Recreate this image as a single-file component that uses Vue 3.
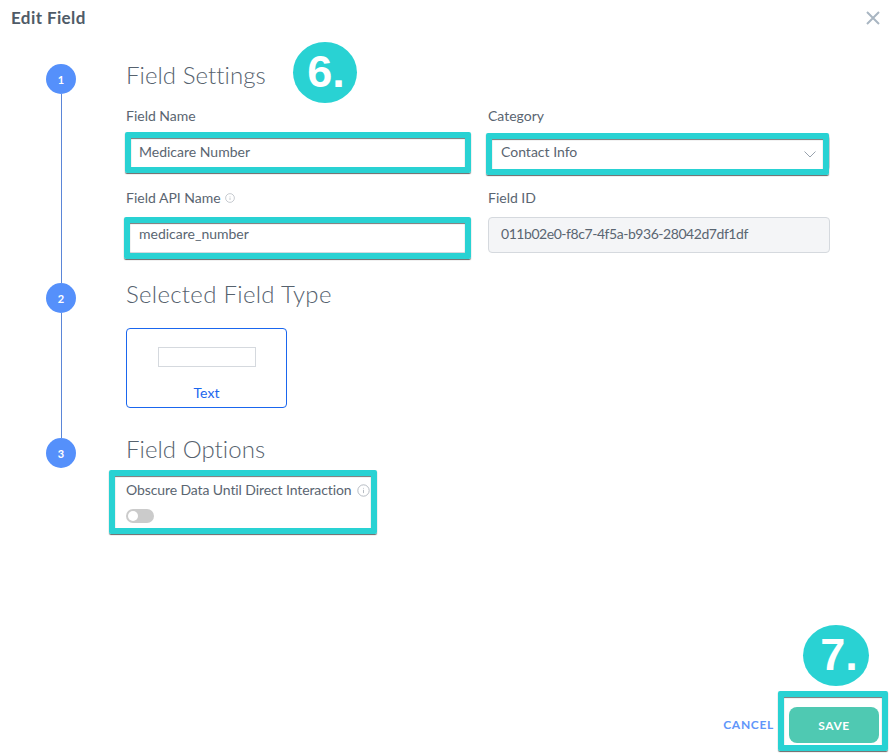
<script setup>
const infoPath = 'M8 7.2v4M8 4.8v.9'
</script>

<template>
  <div class="modal">
    <header class="head">
      <h1 class="head-title">Edit Field</h1>
      <svg class="close" viewBox="0 0 14 14" aria-label="Close">
        <path d="M1 1l12 12M13 1L1 13" />
      </svg>
    </header>

    <main class="steps">
      <section class="step">
        <div class="rail"><span class="dot">1</span><span class="line"></span></div>
        <div class="body">
          <h2 class="title">Field Settings</h2>
          <div class="grid">
            <div class="field">
              <label class="label">Field Name</label>
              <div class="input">Medicare Number</div>
            </div>
            <div class="field">
              <label class="label">Category</label>
              <div class="input select">
                <span>Contact Info</span>
                <svg class="chev" viewBox="0 0 12 7"><path d="M.5.5L6 6 11.5.5" /></svg>
              </div>
            </div>
            <div class="field">
              <label class="label api">Field API Name
                <svg class="info small" viewBox="0 0 16 16"><circle cx="8" cy="8" r="7" /><path :d="infoPath" /></svg>
              </label>
              <div class="input">medicare_number</div>
            </div>
            <div class="field">
              <label class="label">Field ID</label>
              <div class="input disabled">011b02e0-f8c7-4f5a-b936-28042d7df1df</div>
            </div>
          </div>
        </div>
      </section>

      <section class="step">
        <div class="rail"><span class="dot">2</span><span class="line"></span></div>
        <div class="body">
          <h2 class="title">Selected Field Type</h2>
          <div class="type-card">
            <span class="type-preview"></span>
            <span class="type-name">Text</span>
          </div>
        </div>
      </section>

      <section class="step last">
        <div class="rail"><span class="dot">3</span></div>
        <div class="body">
          <h2 class="title">Field Options</h2>
          <label class="label option">Obscure Data Until Direct Interaction
            <svg class="info" viewBox="0 0 16 16"><circle cx="8" cy="8" r="7" /><path :d="infoPath" /></svg>
          </label>
          <span class="toggle"><span class="knob"></span></span>
        </div>
      </section>
    </main>

    <footer class="foot">
      <span class="cancel">CANCEL</span>
      <span class="save">SAVE</span>
    </footer>

    <span class="frame f-name"></span>
    <span class="frame f-category"></span>
    <span class="frame f-api"></span>
    <span class="frame f-options"></span>
    <span class="frame f-save"></span>
    <span class="badge b-six">6.</span>
    <span class="badge b-seven">7.</span>
  </div>
</template>

<style>
body { background: #fff; }
</style>

<style scoped>
.modal {
  position: relative;
  width: 893px;
  height: 755px;
  overflow: hidden;
  display: flex;
  flex-direction: column;
  background: #fff;
  color: #5a6571;
  font-family: Lato, "Open Sans", sans-serif;
  font-size: 14px;
  box-sizing: border-box;
}
.head {
  height: 64px;
  flex: none;
  display: flex;
  align-items: flex-start;
  justify-content: space-between;
  padding: 8px 13px 0 11px;
  box-sizing: border-box;
}
.head-title {
  margin: 0;
  font-size: 17px;
  line-height: 20px;
  font-weight: 700;
  letter-spacing: .4px;
  color: #4f5b67;
}
.close { width: 14px; height: 14px; margin-top: 3px; fill: none; stroke: #a9b6c2; stroke-width: 2; }
.steps { flex: 1; padding-left: 46px; }
.step { display: flex; }
.rail {
  width: 30px;
  flex: none;
  margin-right: 50px;
  display: flex;
  flex-direction: column;
  align-items: center;
}
.dot {
  width: 30px;
  height: 30px;
  flex: none;
  border-radius: 50%;
  background: #5590fb;
  color: #fff;
  font-size: 11px;
  font-weight: 700;
  display: flex;
  align-items: center;
  justify-content: center;
}
.line { width: 1px; flex: 1; background: #5b86d8; }
.body { width: 704px; padding-bottom: 30px; }
.title {
  margin: 0 0 20px;
  font-size: 24px;
  line-height: 22px;
  font-weight: 300;
  color: #56626e;
  letter-spacing: .05px;
}
.grid { display: grid; grid-template-columns: 342px 342px; column-gap: 20px; row-gap: 17px; }
.label {
  display: flex;
  align-items: center;
  gap: 5px;
  height: 20px;
  margin-bottom: 9px;
  line-height: 20px;
  font-size: 14px;
  color: #5a6571;
}
.label.api { gap: 4px; }
.input {
  height: 36px;
  box-sizing: border-box;
  padding: 0 12px 3px;
  display: flex;
  align-items: center;
  border: 1px solid #d5d9de;
  border-radius: 4px;
}
.select { justify-content: space-between; padding-right: 13px; }
.chev { width: 12px; height: 7px; margin-top: 5px; fill: none; stroke: #98a2ad; stroke-width: 1; }
.disabled { background: #f4f5f7; letter-spacing: -.45px; }
.info { width: 13px; height: 13px; flex: none; fill: none; stroke: #a6aeb6; stroke-width: 1; }
.info.small { width: 10px; height: 10px; }
.step:nth-child(2) .title { margin-bottom: 23px; letter-spacing: .3px; }
.type-card {
  width: 161px;
  height: 80px;
  box-sizing: border-box;
  border: 1px solid #1a66ee;
  border-radius: 4px;
  padding-top: 18px;
  display: flex;
  flex-direction: column;
  align-items: center;
}
.type-preview { width: 98px; height: 20px; box-sizing: border-box; border: 1px solid #d5d9de; }
.type-name { margin-top: 16px; line-height: 20px; color: #1a66ee; }
.step.last .title { margin-bottom: 20px; }
.option { margin-bottom: 9px; letter-spacing: -.1px; }
.toggle {
  display: block;
  width: 28px;
  height: 14px;
  border-radius: 7px;
  background: #cbcbcb;
  padding: 2px;
  box-sizing: border-box;
}
.knob { display: block; width: 10px; height: 10px; border-radius: 50%; background: #fff; }
.foot {
  flex: none;
  height: 48px;
  display: flex;
  align-items: flex-start;
  justify-content: flex-end;
  padding-right: 14px;
  box-sizing: border-box;
  gap: 15px;
}
.cancel {
  height: 36px;
  line-height: 36px;
  font-size: 12px;
  font-weight: 700;
  letter-spacing: .7px;
  color: #5f96fa;
}
.save {
  width: 90px;
  height: 36px;
  border-radius: 8px;
  background: #4fc9b2;
  color: #fff;
  font-size: 12px;
  font-weight: 700;
  letter-spacing: .5px;
  display: flex;
  align-items: center;
  justify-content: center;
}
/* Annotation overlays drawn on top of the screenshot */
.frame {
  position: absolute;
  box-sizing: border-box;
  border: 6px solid #29d2d3;
  border-radius: 2px;
  box-shadow: 0 1px 1px #666, inset 0 1px 1px #777;
}
.f-name { left: 125px; top: 132px; width: 346px; height: 41px; }
.f-category { left: 486px; top: 133px; width: 343px; height: 42px; }
.f-api { left: 124px; top: 217px; width: 347px; height: 42px; }
.f-options { left: 109px; top: 470px; width: 268px; height: 64px; }
.f-save { left: 778px; top: 691px; width: 110px; height: 60px; }
.badge {
  position: absolute;
  border-radius: 50%;
  background: #29d2d3;
  color: #fff;
  font-family: "Liberation Sans", sans-serif;
  font-weight: 700;
  font-size: 45px;
  line-height: 1;
  display: flex;
  align-items: center;
  justify-content: center;
  box-sizing: border-box;
}
.b-six { left: 293px; top: 42px; width: 64px; height: 61px; padding-left: 2px; padding-bottom: 2px; }
.b-seven { left: 803px; top: 625px; width: 66px; height: 61px; padding-left: 6px; padding-bottom: 2px; }
</style>
